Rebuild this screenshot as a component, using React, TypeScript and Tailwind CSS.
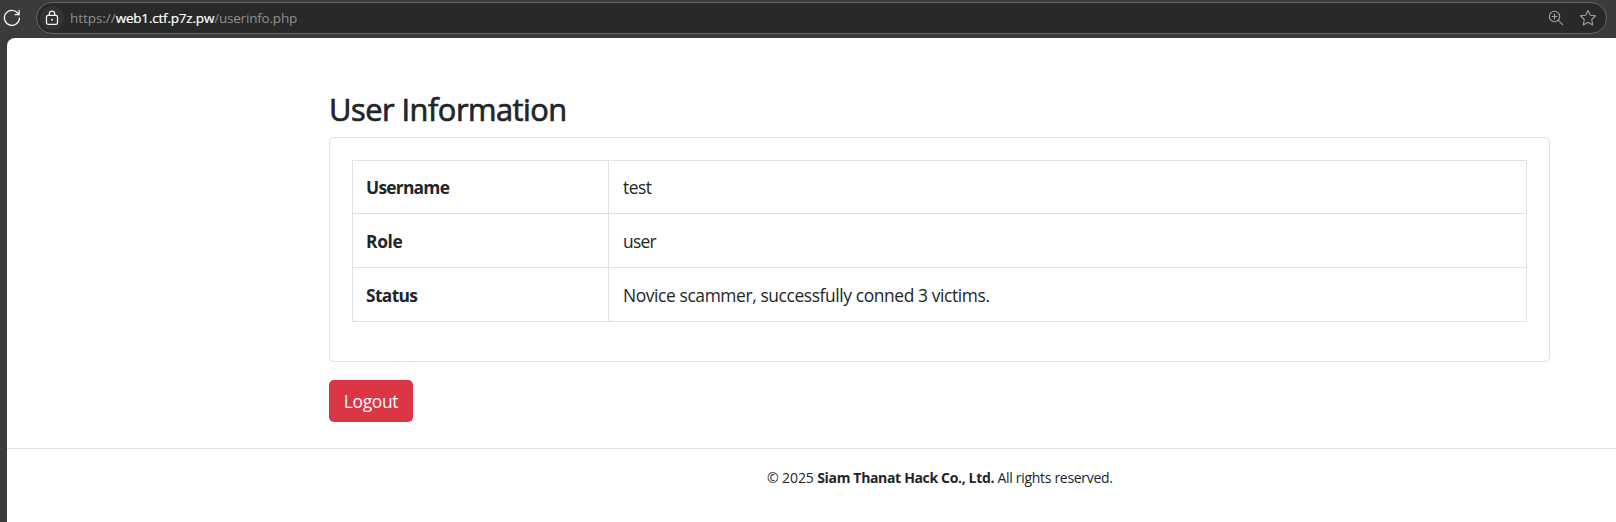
const rows = [
  { label: "Username", value: "test", height: "h-[53px]", labelSpacing: "tracking-[-0.76px]", valueSpacing: "tracking-[-0.5px]" },
  { label: "Role", value: "user", height: "h-[54px]", labelSpacing: "tracking-[-0.35px]", valueSpacing: "tracking-[-0.7px]" },
  {
    label: "Status",
    value: "Novice scammer, successfully conned 3 victims.",
    height: "h-[54px]",
    labelSpacing: "tracking-[-0.65px]",
    valueSpacing: "tracking-[-0.39px]",
  },
];

function ReloadIcon() {
  return (
    <svg className="h-[18px] w-[18px] shrink-0" viewBox="0 0 18 18" fill="none" stroke="#f2f2f2" strokeWidth="1.35" strokeLinecap="round" strokeLinejoin="round">
      <path d="M16.4 9.2A7.5 7.5 0 1 1 14.6 4L16 5.4" />
      <path d="M16.1 1.4V5.6H11.9" />
    </svg>
  );
}

function LockIcon() {
  return (
    <svg className="h-4 w-4" viewBox="0 0 16 16" fill="none" stroke="#f2f2f2" strokeWidth="1.3">
      <rect x="2.5" y="5.3" width="11" height="9" rx="1.6" />
      <path d="M5.3 5.2V3.8a2.7 2.7 0 0 1 5.4 0v1.4" />
      <circle cx="8" cy="9.8" r="1" fill="#f2f2f2" stroke="none" />
    </svg>
  );
}

function ZoomIcon() {
  return (
    <svg className="h-4 w-4" viewBox="0 0 16 16" fill="none" stroke="#a0a0a0" strokeWidth="1.1" strokeLinecap="round">
      <circle cx="6.5" cy="6.5" r="5.2" />
      <path d="M10.4 10.4 14.7 14.7M6.5 4v5M4 6.5h5" />
    </svg>
  );
}

function StarIcon() {
  return (
    <svg className="h-[18px] w-[18px]" viewBox="0 0 18 18" fill="none" stroke="#a0a0a0" strokeWidth="1.1" strokeLinejoin="round">
      <path d="M9 1.4 11.3 6.2 16.6 6.9 12.7 10.5 13.7 15.9 9 13.3 4.3 15.9 5.3 10.5 1.4 6.9 6.7 6.2Z" />
    </svg>
  );
}

function AddressBar() {
  return (
    <header className="flex h-[38px] items-start pl-[3px] pr-[9px] pt-[2px]">
      <div className="flex h-8 w-[33px] items-center">
        <ReloadIcon />
      </div>
      <div className="flex h-8 flex-1 items-center rounded-full border border-[#666666] bg-[#292929] pl-[3px] pr-[9px]">
        <div className="flex h-6 w-6 items-center justify-center rounded-full bg-[#333333]">
          <LockIcon />
        </div>
        <div className="flex-1 whitespace-nowrap pl-[6px] font-['Open_Sans',sans-serif] text-[13.5px] leading-5 tracking-[-0.2px] text-[#8f8f8f]">
          <span className="tracking-[-0.05px]">https://</span>
          <span className="text-white [-webkit-text-stroke:0.2px_white]">web1.ctf.p7z.pw</span>/userinfo.php
        </div>
        <div className="flex items-center gap-[15px]">
          <ZoomIcon />
          <StarIcon />
        </div>
      </div>
    </header>
  );
}

export default function App() {
  return (
    <div className="flex h-[522px] w-full flex-col overflow-hidden bg-[#3b3b3b]">
      <AddressBar />
      <div className="ml-[7px] flex-1 rounded-tl-[8px] bg-white font-['Open_Sans',sans-serif] text-[#212529]">
        <main className="ml-[322px] mr-[66px] pt-[51px]">
          <h1 className="h-12 whitespace-nowrap text-[30.8px] font-normal leading-[40px] tracking-[-0.5px] [-webkit-text-stroke:0.7px_#212529]">
            User Information
          </h1>
          <section className="h-[225px] rounded-[5px] border border-[#dee0e2] px-[22px] pt-[22px]">
            <table className="w-full table-fixed border-collapse text-[17.4px] leading-[26px]">
              <colgroup>
                <col className="w-[256px]" />
                <col />
              </colgroup>
              <tbody>
                {rows.map((row) => (
                  <tr key={row.label} className={row.height}>
                    <th className={"whitespace-nowrap border border-[#dee2e6] pl-[13px] text-left font-bold " + row.labelSpacing}>{row.label}</th>
                    <td className={"whitespace-nowrap border border-[#dee2e6] px-[14px] " + row.valueSpacing}>{row.value}</td>
                  </tr>
                ))}
              </tbody>
            </table>
          </section>
          <button className="mt-[18px] block h-[42px] w-[84px] whitespace-nowrap rounded-[5px] bg-[#dc3545] text-center text-[17.4px] leading-[42px] tracking-[-0.3px] text-white">
            Logout
          </button>
        </main>
        <footer className="mt-[26px] border-t border-[#dfe1e3] pt-[19px] pl-[760px] text-[14px] leading-5">
          <p className="whitespace-nowrap tracking-[-0.3px]">
            <span className="tracking-[-0.1px]">© 2025 </span>
            <strong className="font-bold tracking-[-0.34px]">Siam Thanat Hack Co., Ltd.</strong> All rights reserved.
          </p>
        </footer>
      </div>
    </div>
  );
}
